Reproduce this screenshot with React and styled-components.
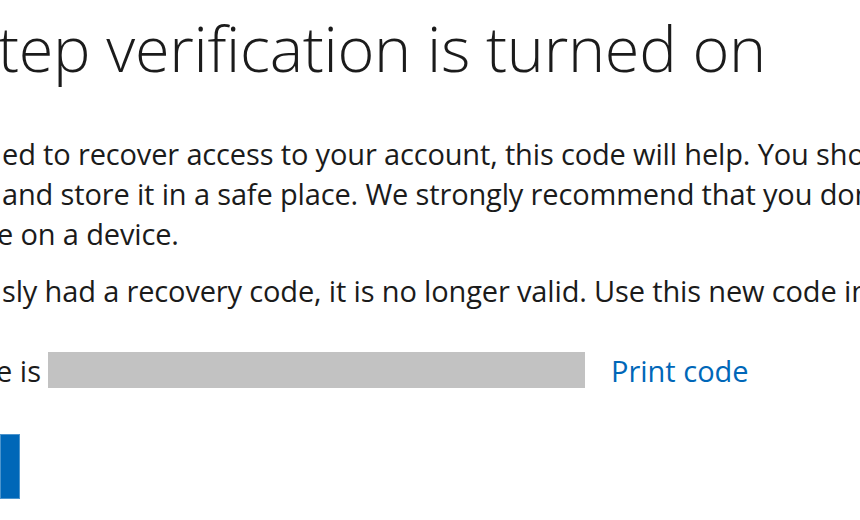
import React from "react";
import styled, { createGlobalStyle } from "styled-components";

const Global = createGlobalStyle`
  html, body { margin: 0; padding: 0; background: #fff; }
  body { font-family: "Open Sans", "Noto Sans", sans-serif; color: #1b1b1b; }
`;

const Page = styled.div`
  width: 860px;
  height: 520px;
  overflow: hidden;
  display: flex;
  flex-direction: column;
  padding-top: 8px;
  box-sizing: border-box;
`;

const Title = styled.h1`
  margin: 0 0 0 -2px;
  font-weight: 300;
  font-size: 63px;
  line-height: 80px;
  white-space: nowrap;
  color: #1b1b1b;
  letter-spacing: -0.3px;
`;

const Paragraph = styled.div`
  display: flex;
  flex-direction: column;
  margin-top: ${(p) => p.$top}px;
`;

const Line = styled.div`
  font-size: 29px;
  line-height: 40px;
  letter-spacing: -0.15px;
  white-space: nowrap;
  margin-left: ${(p) => p.$shift || 0}px;
`;

const CodeRow = styled.div`
  display: flex;
  align-items: center;
  margin-top: 41px;
  height: 36px;
`;

const CodeLabel = styled.span`
  font-size: 29px;
  margin-left: -4px;
  white-space: nowrap;
`;

const CodeBox = styled.div`
  width: 537px;
  height: 36px;
  background: #c2c2c2;
  margin-left: 7px;
`;

const PrintLink = styled.a`
  font-size: 29px;
  color: #0067b8;
  margin-left: 26px;
  text-decoration: none;
  white-space: nowrap;
  cursor: pointer;
`;

const NextButton = styled.button`
  width: 20px;
  height: 65px;
  margin-top: 46px;
  background: #0067b8;
  border: 1px solid #4c94cd;
  padding: 0;
`;

export default function App() {
  return (
    <>
      <Global />
      <Page>
        <Title>tep verification is turned on</Title>
        <Paragraph $top={46}>
          <Line $shift={2}>ed to recover access to your account, this code will help. You should print it out</Line>
          <Line $shift={2}> and store it in a safe place. We strongly recommend that you don't store it</Line>
          <Line $shift={-3}>e on a device.</Line>
        </Paragraph>
        <Paragraph $top={17}>
          <Line $shift={2}>sly had a recovery code, it is no longer valid. Use this new code instead.</Line>
        </Paragraph>
        <CodeRow>
          <CodeLabel>e is</CodeLabel>
          <CodeBox />
          <PrintLink>Print code</PrintLink>
        </CodeRow>
        <NextButton aria-label="Next" />
      </Page>
    </>
  );
}
